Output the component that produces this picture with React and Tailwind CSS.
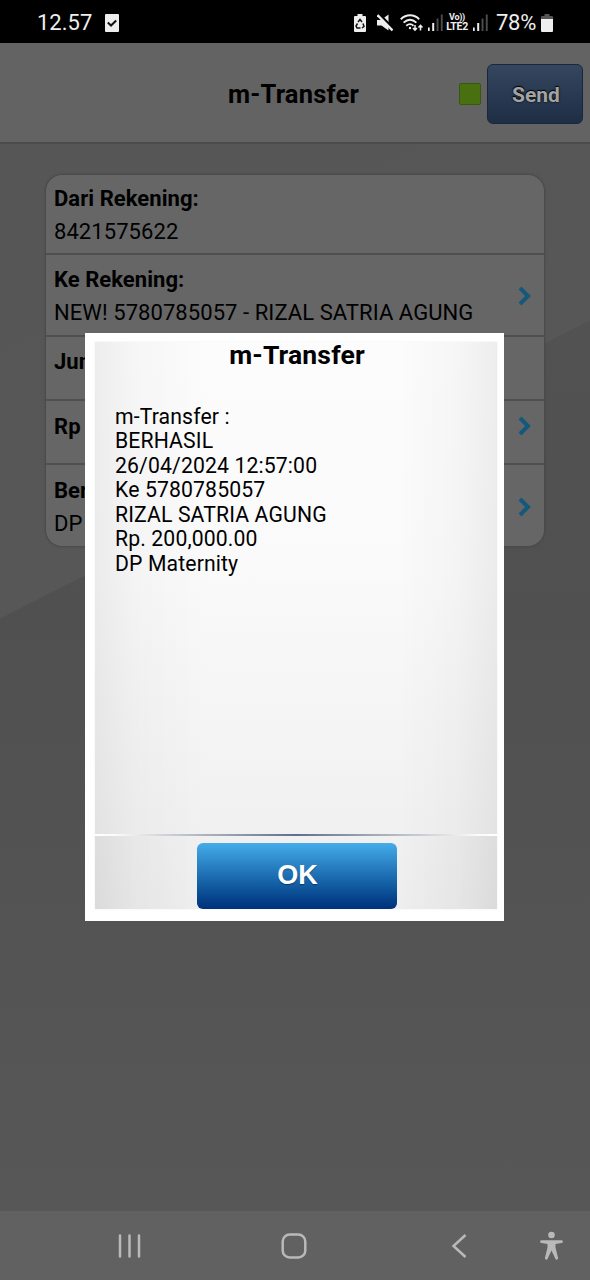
import clsx from 'clsx'

const rows = [
  { title: "Dari Rekening:", value: "8421575622", height: "h-20", pad: "pt-px", arrow: false },
  { title: "Ke Rekening:", value: "NEW! 5780785057 - RIZAL SATRIA AGUNG", height: "h-[82px]", pad: "pt-0.5", arrow: true },
  { title: "Jumlah", height: "h-16", pad: "pb-3.5", arrow: false },
  { title: "Rp", height: "h-16", pad: "pb-3", arrow: true },
  { title: "Berita", value: "DP", height: "h-[83px]", pad: "pt-px", arrow: true },
];

const lines = [
  "m-Transfer :",
  "BERHASIL",
  "26/04/2024 12:57:00",
  "Ke 5780785057",
  "RIZAL SATRIA AGUNG",
  "Rp. 200,000.00",
  "DP Maternity",
];

function Signal() {
  return (
    <svg width="15" height="18" viewBox="0 0 15 18" fill="#eee">
      <rect x="0" y="13.500" width="1.700" height="3.500" />
      <rect x="4.200" y="9" width="2" height="8" />
      <rect x="8.600" y="4.500" width="1.900" height="12.500" fill="#4c4c4c" />
      <rect x="12.800" y="0.500" width="1.900" height="16.500" fill="#4c4c4c" />
    </svg>
  )
}

function StatusBar() {
  return (
    <div className="flex h-[43px] items-center bg-black pt-[2px] pr-[37px] pl-[37px] text-[#eee]">
      <span className="text-[22px] leading-none">12.57</span>
      <svg className="ml-[13px]" width="14" height="18" viewBox="0 0 14 18">
        <rect width="14" height="18" rx="1" fill="#eee" />
        <path d="M2.800 8.500l3.200 3 5.200-5" fill="none" stroke="#111" strokeWidth="2" />
      </svg>
      <div className="ml-auto flex items-center">
        <svg width="12" height="18" viewBox="0 0 12 18">
          <path d="M3.500 0h5v2H11a1 1 0 0 1 1 1v14a1 1 0 0 1-1 1H1a1 1 0 0 1-1-1V3a1 1 0 0 1 1-1h2.500z" fill="#eee" />
          <path d="M4 8l2-2.500 2 2.500M9 9.500l1 3-2 1.500M6.500 14H3l-1-2 1.500-2.500" fill="none" stroke="#111" strokeWidth="1.500" />
        </svg>
        <svg className="ml-[11px]" width="16" height="18" viewBox="0 0 16 18">
          <path d="M0 6h4l7.500-5.500v16L4.500 11.500H0z" fill="#eee" />
          <path d="M1.500 0l15 15.500" stroke="#000" strokeWidth="3.500" />
          <path d="M0.500 1l15 15.500" stroke="#eee" strokeWidth="2.300" />
        </svg>
        <svg className="ml-[7px]" width="23" height="18" viewBox="0 0 23 18" fill="none" stroke="#eee" strokeWidth="1.900">
          <path d="M0.800 5.200c5.500-5.200 13-5.200 18.400 0M3.600 8.600c4-3.700 8.800-3.700 12.800 0M6.300 11.700c2.400-2 5-2 7.200 0" />
          <circle cx="10" cy="14" r="1.200" fill="#eee" stroke="none" />
          <path d="M15 11v5M13 14l2 2.200 2-2.200M20.500 16.500v-5M18.500 13.500l2-2.200 2 2.200" strokeWidth="1.500" />
        </svg>
        <span className="ml-[5px]"><Signal /></span>
        <div className="ml-[3px] flex w-[22px] flex-col items-center font-bold">
          <span className="text-[9px] leading-[9px] tracking-[-0.300px]">Vo))</span>
          <span className="text-[10.500px] leading-[10px] tracking-[-0.300px]">LTE2</span>
        </div>
        <span className="ml-[5px]"><Signal /></span>
        <span className="ml-2 text-[22px] leading-none tracking-[-0.300px]">78%</span>
        <svg className="ml-[5px]" width="12" height="18" viewBox="0 0 12 18">
          <path d="M3.500 0h5v2H11a1 1 0 0 1 1 1v3H0V3a1 1 0 0 1 1-1h2.500z" fill="#555" />
          <path d="M0 5h12v12a1 1 0 0 1-1 1H1a1 1 0 0 1-1-1z" fill="#eee" />
        </svg>
      </div>
    </div>
  )
}

function Header() {
  return (
    <div className="flex h-[101px] items-center justify-end border-b-2 border-[#4b4b4b] bg-[#636363] pt-[2px] pr-[7px]">
      <h1 className="mt-[2px] mr-[100px] text-[25.500px] font-bold tracking-[0.200px]">m-Transfer</h1>
      <div className="h-[22px] w-[22px] rounded-xs border border-[#38570f] bg-[#487010]" />
      <button className="ml-[6px] h-[60px] w-[96px] rounded-md border border-[#18273e] bg-linear-to-b from-[#35475f] to-[#1d2e45] pt-[4px] pl-[2px] text-[21px] font-bold text-[#a3a3a3] [text-shadow:0_0_2px_#000,0_-1px_1px_#000]">
        Send
      </button>
    </div>
  )
}

function Row({ row }) {
  return (
    <div className={clsx("flex items-center justify-between border-b-2 border-[#4f4f4f] pr-[12px] pl-2 last:border-b-0", row.height, row.pad)}>
      <div className="text-[22px] leading-[33px] whitespace-nowrap">
        <p className="font-bold tracking-[0.050px]">{row.title}</p>
        {row.value && <p className="tracking-[0.070px]">{row.value}</p>}
      </div>
      {row.arrow && (
        <svg width="14" height="20" viewBox="0 0 14 20" fill="none" stroke="#14587c" strokeWidth="4">
          <path d="M2 2l8 8-8 8" />
        </svg>
      )}
    </div>
  )
}

function Dialog() {
  return (
    <div className="absolute top-[333px] left-[85px] flex h-[588px] w-[419px] flex-col bg-white pt-[9px] pr-[7px] pb-[12px] pl-[10px]">
      <div className="flex flex-1 flex-col items-center bg-[linear-gradient(to_right,#0000000f_0%,#00000006_10%,transparent_28%,transparent_75%,#00000006_90%,#0000000f_100%),linear-gradient(to_bottom,#fcfcfc_0%,#fafafa_40%,#eeeeef_100%)] shadow-[0_0_2px_#eee]">
        <h2 className="mt-[-5px] ml-[2px] text-[26.500px] leading-[36px] font-bold tracking-[0.150px]">m-Transfer</h2>
        <div className="mt-[31.500px] w-full pl-5 text-[21.200px] leading-[24.600px] tracking-[0.130px]">
          {lines.map((line, index) => (
            <p key={index}>{line}</p>
          ))}
        </div>
        <div className="mt-auto h-[2px] w-full bg-[linear-gradient(to_right,#fff_0%,#fafafa_5%,#eee_9%,#b4bac4_25%,#5d708c_50%,#b4bac4_75%,#eee_91%,#fafafa_95%,#fff_100%)]" />
        <div className="flex w-full justify-center bg-[linear-gradient(to_right,#00000006,transparent_25%,transparent_75%,#00000006)] pt-[7px] pl-[1px]">
          <button className="h-[66px] w-[200px] rounded-md bg-linear-to-b from-[#44adea] to-[#01307b] pb-0.5 pl-0.5 font-['Liberation_Sans',sans-serif] text-[27px] font-bold text-white [text-shadow:0_1px_1px_#00000066]">
            OK
          </button>
        </div>
      </div>
    </div>
  )
}

function NavBar() {
  return (
    <div className="flex h-[69px] items-center bg-[#616161] pl-[118px]">
      <svg width="24" height="24" viewBox="0 0 24 24" stroke="#b9b9b9" strokeWidth="2.500" strokeLinecap="round">
        <path d="M2 1.500v21M11.500 1.500v21M21 1.500v21" />
      </svg>
      <svg className="ml-[139px]" width="26" height="26" viewBox="0 0 26 26" fill="none" stroke="#b9b9b9" strokeWidth="2.500">
        <rect x="1.700" y="1.500" width="22.600" height="23" rx="7" />
      </svg>
      <svg className="ml-[144px]" width="18" height="24" viewBox="0 0 18 24" fill="none" stroke="#b9b9b9" strokeWidth="2.500">
        <path d="M14.500 1L2.500 12l12 11" />
      </svg>
      <svg className="ml-[71px]" width="24" height="29" viewBox="0 0 24 29" fill="#b9b9b9">
        <circle cx="11.500" cy="4" r="3.300" />
        <path d="M1.500 9.300h20a1.300 1.300 0 0 1 0 2.700L15.500 13v3.500l2.500 10.200a1.300 1.300 0 0 1-2.600 1L11.500 19.500 7.600 27.700a1.300 1.300 0 0 1-2.600-1L7.500 16.500V13L1.500 12a1.300 1.300 0 0 1 0-2.700z" />
      </svg>
    </div>
  )
}

function App() {
  return (
    <div className="relative flex h-[1280px] w-[590px] flex-col overflow-hidden bg-[#555] font-[Roboto,sans-serif] text-black">
      <StatusBar />
      <Header />
      {/* light wedge above the diagonal, darker fade below it */}
      <div className="flex-1 bg-[linear-gradient(153.200deg,#565656_0%,#575757_423px,transparent_424px),linear-gradient(to_bottom,#535353_0%,#505050_45%,#575757_100%)] px-[46px] pt-[31px]">
        <div className="h-[371px] overflow-hidden rounded-[16px] bg-[#666] shadow-[0_0_2px_1px_#484848]">
          {rows.map((row, index) => (
            <Row key={index} row={row} />
          ))}
        </div>
      </div>
      <NavBar />
      <Dialog />
    </div>
  )
}

export default App
